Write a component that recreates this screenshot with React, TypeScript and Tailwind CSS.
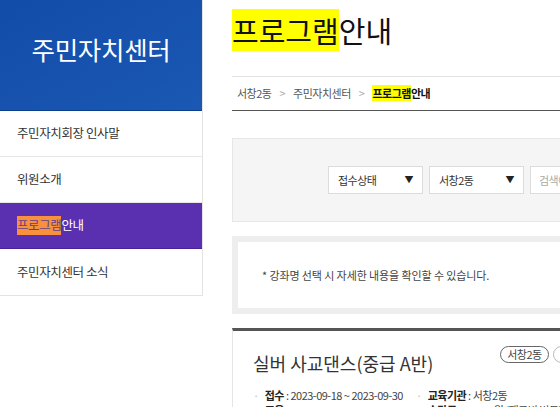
import React from "react";

const menu = [
	{ label: "주민자치회장 인사말" },
	{ label: "위원소개" },
	{ label: "프로그램안내", active: true },
	{ label: "주민자치센터 소식" },
];

function Sidebar() {
	return (
		<aside className="w-[203px] shrink-0 self-start border-r border-b border-[#e3e3e3]">
			{/* Header */}
			<div className="h-[111px] bg-gradient-to-br from-[#124ca9] to-[#1a58b3] border-b border-[#0d3f8f] flex justify-center pt-[33px]">
				<h2 className="text-[25.5px] leading-[32px] tracking-[-0.3px] text-white">주민자치센터</h2>
			</div>
			<ul>
				{menu.map((m, i) =>
					m.active ? (
						<li
							key={i}
							className="h-[46px] flex items-center pl-[17px] bg-[#5a30b0] border-b border-[#4a2497] text-[12.5px] tracking-[-0.4px] text-white"
						>
							<span className="bg-[#f7913d] text-[#6a3f86]">프로그램</span>
							<span>안내</span>
						</li>
					) : (
						<li
							key={i}
							className={`h-[46px] flex items-center pl-[17px] text-[12.5px] tracking-[-0.4px] text-[#333] ${
								i < menu.length - 1 ? "border-b border-[#e8e8e8]" : ""
							}`}
						>
							{m.label}
						</li>
					)
				)}
			</ul>
		</aside>
	);
}

function SelectBox({ label }: { label: string }) {
	return (
		<div className="w-[95px] h-[28px] bg-white border border-[#dcdcdc] flex items-center justify-between pl-[9px] pr-[9px] text-[11px] tracking-[-0.5px] text-[#333]">
			<span>{label}</span>
			<span className="text-[9px] text-[#222]">▼</span>
		</div>
	);
}

function Info({ label, value }: { label: string; value: string }) {
	return (
		<div className="flex items-center whitespace-nowrap">
			<span className="text-[#bbb] mr-[6px]">·</span>
			<b className="font-bold text-[#222]">{label}</b>
			<span className="text-[#444]">&nbsp;:&nbsp;{value}</span>
		</div>
	);
}

export default function App() {
	return (
		<div
			className="w-[560px] h-[407px] overflow-hidden bg-white flex"
			style={{ fontFamily: '"Noto Sans CJK KR", "Noto Sans", sans-serif' }}
		>
			<Sidebar />

			{/* Main Section */}
			<main className="pl-[29px] w-[900px] shrink-0">
				<h1 className="mt-[12px] h-[36px] leading-[36px] text-[29px] text-[#111]">
					<span className="bg-[#ffff00]">프로그램</span>안내
				</h1>

				{/* Breadcrumb */}
				<div className="mt-[28px] h-[35px] border-t border-[#e2e2e2] border-b border-b-[#555] flex items-center pl-[5px] text-[11px] tracking-[-0.5px] text-[#555]">
					<span>서창2동</span>
					<span className="mx-[8px] text-[#aaa]">&gt;</span>
					<span>주민자치센터</span>
					<span className="mx-[8px] text-[#aaa]">&gt;</span>
					<b className="font-bold text-[#111]">
						<span className="bg-[#ffff00]">프로그램</span>안내
					</b>
				</div>

				{/* Filter */}
				<div className="mt-[27px] h-[84px] bg-[#f5f5f5] border border-[#e6e6e6] flex items-center pl-[95px] gap-[6px]">
					<SelectBox label="접수상태" />
					<SelectBox label="서창2동" />
					<div className="w-[180px] h-[28px] bg-white border border-[#dcdcdc] flex items-center pl-[8px] text-[11px] tracking-[-0.5px] text-[#aaa]">
						검색어를 입력하세요
					</div>
				</div>

				{/* Notice */}
				<div className="mt-[14px] h-[78px] border-[6px] border-[#eeeeee] flex items-center pl-[24px] text-[11px] tracking-[-0.1px] text-[#444]">
					* 강좌명 선택 시 자세한 내용을 확인할 수 있습니다.
				</div>

				{/* Program card */}
				<div className="mt-[14px] border-t-[3px] border-t-[#555] border-x border-x-[#e5e5e5] pl-[20px] pt-[15px] pb-[20px]">
					<div className="flex items-start">
						<h3 className="mt-[5px] text-[18px] leading-[24px] text-[#333]">
							실버 사교댄스(중급 A반)
						</h3>
						<p className="ml-[67px] whitespace-nowrap text-[11px] leading-[15px] tracking-[-0.5px]">
							<span className="inline-block px-[6px] rounded-full border border-[#666] text-[#444]">서창2동</span>
							<span className="inline-block ml-[4px] px-[6px] rounded-full border border-[#bbb] text-[#888]">접수마감</span>
						</p>
					</div>
					<div className="mt-[13px] grid grid-cols-[163px_1fr] text-[11px] leading-[15px] tracking-[-0.5px]">
						<Info label="접수" value="2023-09-18 ~ 2023-09-30" />
						<Info label="교육기관" value="서창2동" />
						<Info label="교육" value="2023-10-04 ~ 2023-10-30" />
						<Info label="수강료" value="54,000원 (재료비 별도)" />
					</div>
				</div>
			</main>
		</div>
	);
}
